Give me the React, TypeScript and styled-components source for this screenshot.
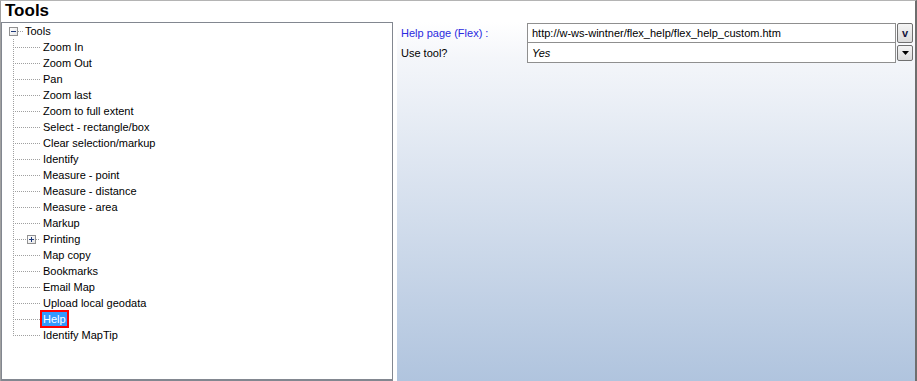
import styled, { createGlobalStyle } from 'styled-components'

const GlobalStyle = createGlobalStyle`
  html, body {
    margin: 0;
    padding: 0;
    background: #ffffff;
  }
  body {
    font-family: "Liberation Sans", Arial, sans-serif;
    font-size: 11px;
    color: #000;
  }
`;

const Frame = styled.div`
  box-sizing: border-box;
  width: 917px;
  height: 381px;
  display: flex;
  flex-direction: column;
  border-top: 1px solid #b4b4b4;
  border-left: 1px solid #a0a0a0;
  border-right: 2px solid #6e6e6e;
  background: #ffffff;
  overflow: hidden;
`;

const TitleBar = styled.div`
  height: 21px;
  line-height: 20px;
  padding-left: 4px;
  font-size: 17px;
  font-weight: bold;
`;

const Body = styled.div`
  flex: 1;
  display: flex;
  gap: 4px;
  min-height: 0;
`;

const TreePanel = styled.div`
  box-sizing: border-box;
  width: 392px;
  border: 1px solid #828790;
  border-bottom-width: 2px;
  background: #fff;
  display: flex;
  flex-direction: column;
`;

const Row = styled.div`
  display: flex;
  align-items: center;
  height: 16px;
  white-space: nowrap;
`;

const Spacer = styled.div<{ $w: number }>`
  width: ${(p) => p.$w}px;
  flex: none;
`;

const dots = '#a0a0a0';

const Connector = styled.div<{ $last?: boolean }>`
  flex: none;
  display: flex;
  align-items: center;
  width: 27px;
  height: 16px;
  background-image: repeating-linear-gradient(to bottom, ${dots} 0 1px, transparent 1px 2px);
  background-repeat: no-repeat;
  background-position: left top;
  background-size: 1px ${(p) => (p.$last ? '50%' : '100%')};
`;

const Dots = styled.div<{ $w: number }>`
  flex: none;
  width: ${(p) => p.$w}px;
  height: 1px;
  background-image: repeating-linear-gradient(to right, ${dots} 0 1px, transparent 1px 2px);
`;

const Expander = styled.div`
  flex: none;
  box-sizing: border-box;
  width: 9px;
  height: 9px;
  border: 1px solid #919191;
  background: linear-gradient(135deg, #ffffff, #e6e6e6);
  display: flex;
  align-items: center;
  justify-content: center;
`;

const Label = styled.span<{ $selected?: boolean }>`
  box-sizing: border-box;
  line-height: 14px;
  padding: 0 1px;
  border: 2px solid ${(p) => (p.$selected ? '#ff0000' : 'transparent')};
  background: ${(p) => (p.$selected ? '#3399ff' : 'transparent')};
  color: ${(p) => (p.$selected ? '#ffffff' : '#000000')};
`;

const RootLabel = styled(Label)`
  margin-left: -2px;
`;

const PropPanel = styled.div`
  flex: 1;
  background: linear-gradient(to bottom, #ffffff 0%, #f4f6fa 10%, #b0c4de 100%);
  padding-top: 1px;
`;

const Grid = styled.div`
  display: grid;
  grid-template-columns: 130px 369px 17px;
  grid-template-rows: 20px 20px;
`;

const PropName = styled.div<{ $link?: boolean }>`
  display: flex;
  align-items: center;
  padding-left: 4px;
  color: ${(p) => (p.$link ? '#2a2ae0' : '#000')};
`;

const ValueBox = styled.div<{ $first?: boolean }>`
  box-sizing: border-box;
  display: flex;
  align-items: center;
  padding-left: 4px;
  background: #fff;
  border: 1px solid #8f8f8f;
  border-top-width: ${(p) => (p.$first ? 1 : 0)}px;
`;

const Italic = styled.span`
  font-style: italic;
`;

const ButtonCell = styled.div`
  display: flex;
  align-items: flex-start;
  justify-content: flex-end;
`;

const EditButton = styled.div<{ $h: number }>`
  box-sizing: border-box;
  width: 16px;
  height: ${(p) => p.$h}px;
  margin-top: ${(p) => (p.$h < 18 ? 2 : 0)}px;
  border: 1px solid #707070;
  border-radius: 2px;
  background: linear-gradient(to bottom, #f4f4f4, #dcdcdc);
  display: flex;
  align-items: center;
  justify-content: center;
  font-weight: bold;
  font-size: 11px;
  color: #14143c;
`;

const tools = [
  'Zoom In',
  'Zoom Out',
  'Pan',
  'Zoom last',
  'Zoom to full extent',
  'Select - rectangle/box',
  'Clear selection/markup',
  'Identify',
  'Measure - point',
  'Measure - distance',
  'Measure - area',
  'Markup',
  'Printing',
  'Map copy',
  'Bookmarks',
  'Email Map',
  'Upload local geodata',
  'Help',
  'Identify MapTip',
];

function Sign({ plus }: { plus?: boolean }) {
  return (
    <svg width="7" height="7" viewBox="0 0 7 7">
      <rect x="1" y="3" width="5" height="1" fill="#1f3a7a" />
      {plus && <rect x="3" y="1" width="1" height="5" fill="#1f3a7a" />}
    </svg>
  );
}

export default function App() {
  return (
    <>
      <GlobalStyle />
      <Frame>
        <TitleBar>Tools</TitleBar>
        <Body>
          <TreePanel>
            <Row>
              <Spacer $w={7} />
              <Expander>
                <Sign />
              </Expander>
              <Dots $w={6} />
              <RootLabel>Tools</RootLabel>
            </Row>
            {tools.map((t, i) => (
              <Row key={t}>
                <Spacer $w={11} />
                <Connector $last={i === tools.length - 1}>
                  {t === 'Printing' ? (
                    <>
                      <Dots $w={14} />
                      <Expander>
                        <Sign plus />
                      </Expander>
                      <Dots $w={4} />
                    </>
                  ) : (
                    <Dots $w={27} />
                  )}
                </Connector>
                <Label $selected={t === 'Help'}>{t}</Label>
              </Row>
            ))}
          </TreePanel>
          <PropPanel>
            <Grid>
              <PropName $link>Help page (Flex) :</PropName>
              <ValueBox $first>http://w-ws-wintner/flex_help/flex_help_custom.htm</ValueBox>
              <ButtonCell>
                <EditButton $h={20}>v</EditButton>
              </ButtonCell>
              <PropName>Use tool?</PropName>
              <ValueBox>
                <Italic>Yes</Italic>
              </ValueBox>
              <ButtonCell>
                <EditButton $h={16}>
                  <svg width="7" height="4" viewBox="0 0 7 4">
                    <path d="M0 0h7L3.5 4z" fill="#000" />
                  </svg>
                </EditButton>
              </ButtonCell>
            </Grid>
          </PropPanel>
        </Body>
      </Frame>
    </>
  );
}
